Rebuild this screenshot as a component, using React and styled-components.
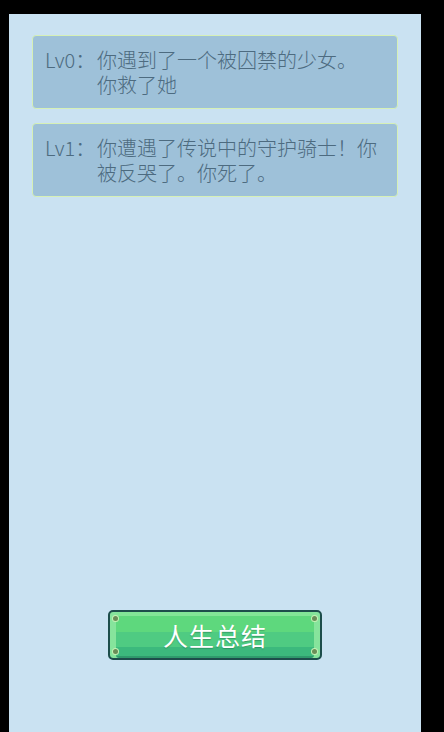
import React from "react";
import styled, { createGlobalStyle } from "styled-components";

const GlobalStyle = createGlobalStyle`
  html, body {
    margin: 0;
    padding: 0;
    background: #000;
    font-family: "Noto Sans CJK SC", "Noto Sans", sans-serif;
  }
`;

const Screen = styled.div`
  width: 444px;
  height: 732px;
  overflow: hidden;
  background: #000;
  padding: 14px 0 0 9px;
  box-sizing: border-box;
`;

const Panel = styled.div`
  width: 412px;
  height: 718px;
  background: #cae2f2;
  box-sizing: border-box;
  padding: 21px 23px 0;
  display: flex;
  flex-direction: column;
`;

const List = styled.div`
  flex: 1;
  display: flex;
  flex-direction: column;
  gap: 14px;
`;

const Card = styled.div`
  display: flex;
  background: #9ec1d9;
  border: 1px solid #d6f0b6;
  border-radius: 4px;
  padding: 11px 13px 11px 12px;
  color: #4d6b80;
  font-size: 20px;
  font-weight: 300;
  line-height: 25px;
`;

const Label = styled.span`
  width: 52px;
  flex-shrink: 0;
  white-space: nowrap;
`;

const Text = styled.span`
  flex: 1;
  white-space: pre-line;
`;

const Footer = styled.div`
  display: flex;
  justify-content: center;
  padding-bottom: 72px;
`;

const Button = styled.button`
  position: relative;
  width: 214px;
  height: 50px;
  border: 2px solid #1d4d4b;
  border-radius: 5px;
  padding: 0;
  cursor: pointer;
  background: linear-gradient(
    to bottom,
    #82e597 0%,
    #82e597 8%,
    #5ed87d 8%,
    #5ed87d 44%,
    #4fcb82 44%,
    #4fcb82 76%,
    #3cb97d 76%,
    #3cb97d 100%
  );
  box-shadow: inset 6px 0 0 #86e49c, inset -6px 0 0 #86e49c,
    inset 0 -2px 0 #2f9a6c;
  color: #fff;
  font-family: "Noto Sans CJK SC", sans-serif;
  font-size: 25px;
  font-weight: 400;
  letter-spacing: 1px;
  text-shadow: 0 1px 1px rgba(20, 90, 60, 0.4);
`;

const Dot = styled.i`
  position: absolute;
  width: 5px;
  height: 5px;
  border-radius: 50%;
  background: #6a8e58;
  box-shadow: 0 0 0 1px #c4f2b4;
  ${(p) => (p.top ? "top: 4px;" : "bottom: 4px;")}
  ${(p) => (p.left ? "left: 3px;" : "right: 3px;")}
`;

const events = [
  { level: "Lv0：", text: "你遇到了一个被囚禁的少女。\n你救了她" },
  { level: "Lv1：", text: "你遭遇了传说中的守护骑士！你被反哭了。你死了。" },
];

const App = () => {
  return (
    <Screen>
      <GlobalStyle />
      <Panel>
        <List>
          {events.map((e, index) => (
            <Card key={index}>
              <Label>{e.level}</Label>
              <Text>{e.text}</Text>
            </Card>
          ))}
        </List>
        <Footer>
          <Button>
            <Dot top left />
            <Dot top />
            <Dot left />
            <Dot />
            人生总结
          </Button>
        </Footer>
      </Panel>
    </Screen>
  );
};

export default App;
